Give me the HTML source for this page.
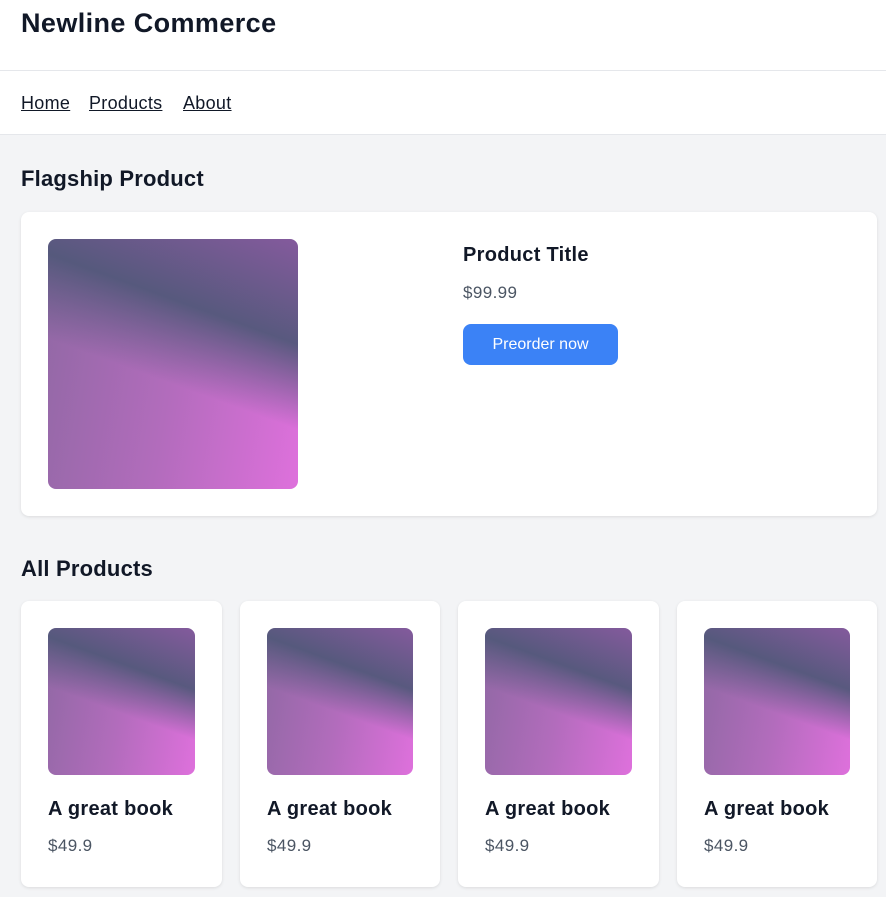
<!DOCTYPE html>
<html><head><style>
*{box-sizing:border-box;margin:0;padding:0}
body{width:886px;height:897px;overflow:hidden;font-family:"Liberation Sans",sans-serif;background:#f3f4f6;color:#111827}
header{background:#fff;height:71px;border-bottom:1px solid #e5e7eb;position:relative}
header h1{position:absolute;left:21px;top:8px;font-size:27px;font-weight:700;letter-spacing:0.4px}
nav{background:#fff;height:64px;border-bottom:1px solid #e5e7eb;position:relative}
nav a{position:absolute;top:22px;font-size:18px;color:#111827;text-decoration:underline;letter-spacing:0.3px}
h2{position:absolute;left:21px;font-size:22px;font-weight:700;letter-spacing:0.2px}
.card{position:absolute;background:#fff;border-radius:8px;box-shadow:0 1px 3px rgba(0,0,0,.1)}
.img{position:absolute;border-radius:8px;background:linear-gradient(200deg,rgba(128,89,154,.95) 0%,rgba(82,88,122,.95) 31%,rgba(150,100,170,0) 56%),linear-gradient(100deg,#9068a4 0%,#b26cbc 50%,#de70dc 100%)}
.t{position:absolute;font-weight:700;font-size:20px;letter-spacing:0.3px}
.p{position:absolute;font-size:17px;color:#4b5563;letter-spacing:0.4px}
.btn{position:absolute;left:442px;top:112px;width:155px;height:41px;background:#3b82f6;border-radius:8px;color:#fff;font-size:16px;text-align:center;line-height:41px}
</style></head><body>
<header><h1>Newline Commerce</h1></header>
<nav><a style="left:21px">Home</a><a style="left:89px">Products</a><a style="left:183px">About</a></nav>
<h2 style="top:166px">Flagship Product</h2>
<div class="card" style="left:21px;top:212px;width:856px;height:304px">
<div class="img" style="left:27px;top:27px;width:250px;height:250px"></div>
<div class="t" style="left:442px;top:32px">Product Title</div>
<div class="p" style="left:442px;top:71px">$99.99</div>
<div class="btn">Preorder now</div>
</div>
<h2 style="top:556px">All Products</h2>
<div class="card" style="left:21px;top:601px;width:201px;height:286px"><div class="img" style="left:27px;top:27px;width:147px;height:147px"></div><div class="t" style="left:27px;top:197px">A great book</div><div class="p" style="left:27px;top:235px">$49.9</div></div>
<div class="card" style="left:240px;top:601px;width:200px;height:286px"><div class="img" style="left:27px;top:27px;width:146px;height:147px"></div><div class="t" style="left:27px;top:197px">A great book</div><div class="p" style="left:27px;top:235px">$49.9</div></div>
<div class="card" style="left:458px;top:601px;width:201px;height:286px"><div class="img" style="left:27px;top:27px;width:147px;height:147px"></div><div class="t" style="left:27px;top:197px">A great book</div><div class="p" style="left:27px;top:235px">$49.9</div></div>
<div class="card" style="left:677px;top:601px;width:200px;height:286px"><div class="img" style="left:27px;top:27px;width:146px;height:147px"></div><div class="t" style="left:27px;top:197px">A great book</div><div class="p" style="left:27px;top:235px">$49.9</div></div>
</body></html>
